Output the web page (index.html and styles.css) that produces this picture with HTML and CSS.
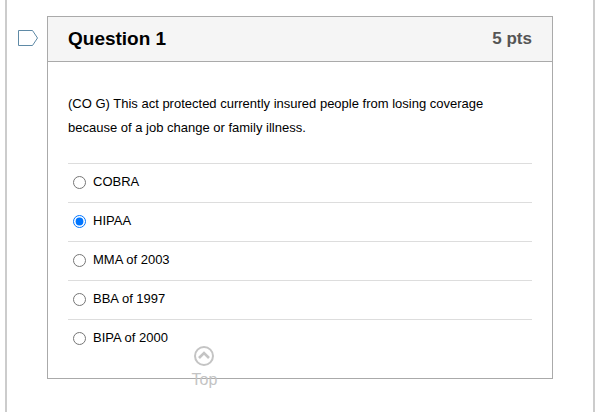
FILE: index.html
```html
<!DOCTYPE html>
<html lang="en">
<head>
    <meta charset="UTF-8">
    <title>Question 1</title>
    <link rel="stylesheet" href="styles.css">
</head>
<body>

<div class="page">
    <svg class="flag" width="22" height="18" viewBox="0 0 22 18">
        <path d="M1.5 1.5H15.5L20.5 9L15.5 16.5H1.5Z" fill="#fff" stroke="#5f8aa6" stroke-width="1"/>
    </svg>

    <div class="question">
        <div class="question-head">
            <div class="question-name">Question 1</div>
            <div class="question-pts">5 pts</div>
        </div>
        <div class="question-body">
            <p class="question-text">(CO G) This act protected currently insured people from losing coverage because of a job change or family illness.</p>
            <div class="answers">
                <label class="answer"><input type="radio" name="q1"><span>COBRA</span></label>
                <label class="answer"><input type="radio" name="q1" checked><span>HIPAA</span></label>
                <label class="answer"><input type="radio" name="q1"><span>MMA of 2003</span></label>
                <label class="answer"><input type="radio" name="q1"><span>BBA of 1997</span></label>
                <label class="answer"><input type="radio" name="q1"><span>BIPA of 2000</span></label>
            </div>
        </div>
    </div>

    <div class="top-link">
        <svg width="22" height="22" viewBox="0 0 22 22">
            <circle cx="11" cy="11" r="9" fill="none" stroke="#c4c4c4" stroke-width="2"/>
            <path d="M6 13L11 8L16 13" fill="none" stroke="#c4c4c4" stroke-width="2.6"/>
        </svg>
        <div class="top-label">Top</div>
    </div>
</div>

</body>
</html>
```

FILE: styles.css
```css
* {
    margin: 0;
    padding: 0;
    box-sizing: border-box;
}

body {
    font-family: "Liberation Sans", Arial, sans-serif;
    font-size: 13px;
    color: #000;
    background: #fff;
}

.page {
    position: relative;
    height: 412px;
    margin: 0 5px;
    padding: 16px 40px 0;
    border-left: 2px solid #ccc;
    border-right: 2px solid #ccc;
}

.flag {
    position: absolute;
    left: 10px;
    top: 29px;
}

.question {
    height: 363px;
    border: 1px solid #aaa;
}

.question-head {
    display: flex;
    justify-content: space-between;
    align-items: center;
    height: 45px;
    padding: 0 20px;
    background: #f5f5f5;
    border-bottom: 1px solid #aaa;
}

.question-name {
    font-size: 19px;
    font-weight: bold;
}

.question-pts {
    font-size: 17px;
    font-weight: bold;
    color: #555;
}

.question-body {
    padding: 30px 20px 0;
}

.question-text {
    line-height: 24px;
    margin-bottom: 23px;
}

.answer {
    display: flex;
    align-items: center;
    height: 39px;
    padding-left: 5px;
    padding-bottom: 2px;
    border-top: 1px solid #ddd;
}

.answer input {
    margin: 1px 7px 0 0;
    width: 13px;
    height: 13px;
}

.answer span {
    margin-top: -1px;
}

.top-link {
    position: absolute;
    left: 172px;
    top: 345px;
    width: 50px;
    text-align: center;
    font-size: 16px;
    color: #c4c4c4;
}

.top-link svg {
    display: block;
    margin: 0 auto;
}

.top-label {
    margin: 4px 0 0 1px;
}
```
